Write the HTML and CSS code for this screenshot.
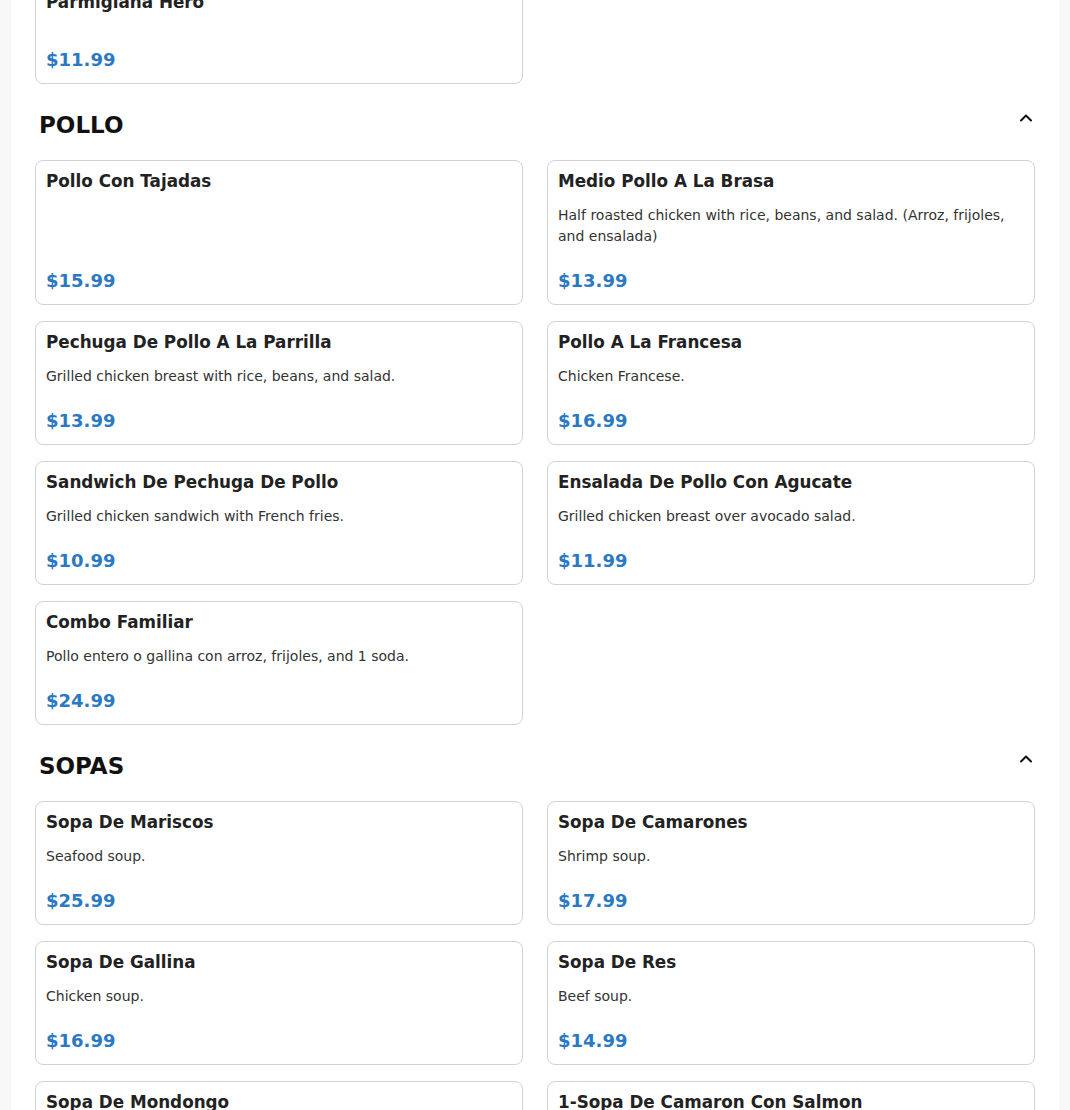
FILE: index.html
```html
<!DOCTYPE html>
<html lang="en">
<head>
<meta charset="utf-8">
<title>Menu</title>
<link rel="stylesheet" href="styles.css">
</head>
<body>
<main class="container">
  <section class="section section-prev">
    <div class="grid">
      <div class="card">
        <h3 class="item-name">Parmigiana Hero</h3>
        <div class="price">$11.99</div>
      </div>
    </div>
  </section>

  <section class="section">
    <div class="section-header">
      <h2 class="section-title">POLLO</h2>
      <svg class="chevron" width="14" height="14" viewBox="0 0 14 14" aria-hidden="true"><path d="M2 9.5 L7 4.5 L12 9.5" fill="none" stroke="#111" stroke-width="2" stroke-linecap="round" stroke-linejoin="round"/></svg>
    </div>
    <div class="grid">
      <div class="card">
        <h3 class="item-name">Pollo Con Tajadas</h3>
        <div class="price">$15.99</div>
      </div>
      <div class="card">
        <h3 class="item-name">Medio Pollo A La Brasa</h3>
        <p class="item-desc">Half roasted chicken with rice, beans, and salad. (Arroz, frijoles, and ensalada)</p>
        <div class="price">$13.99</div>
      </div>
      <div class="card">
        <h3 class="item-name">Pechuga De Pollo A La Parrilla</h3>
        <p class="item-desc">Grilled chicken breast with rice, beans, and salad.</p>
        <div class="price">$13.99</div>
      </div>
      <div class="card">
        <h3 class="item-name">Pollo A La Francesa</h3>
        <p class="item-desc">Chicken Francese.</p>
        <div class="price">$16.99</div>
      </div>
      <div class="card">
        <h3 class="item-name">Sandwich De Pechuga De Pollo</h3>
        <p class="item-desc">Grilled chicken sandwich with French fries.</p>
        <div class="price">$10.99</div>
      </div>
      <div class="card">
        <h3 class="item-name">Ensalada De Pollo Con Agucate</h3>
        <p class="item-desc">Grilled chicken breast over avocado salad.</p>
        <div class="price">$11.99</div>
      </div>
      <div class="card">
        <h3 class="item-name">Combo Familiar</h3>
        <p class="item-desc">Pollo entero o gallina con arroz, frijoles, and 1 soda.</p>
        <div class="price">$24.99</div>
      </div>
    </div>
  </section>

  <section class="section">
    <div class="section-header">
      <h2 class="section-title">SOPAS</h2>
      <svg class="chevron" width="14" height="14" viewBox="0 0 14 14" aria-hidden="true"><path d="M2 9.5 L7 4.5 L12 9.5" fill="none" stroke="#111" stroke-width="2" stroke-linecap="round" stroke-linejoin="round"/></svg>
    </div>
    <div class="grid">
      <div class="card">
        <h3 class="item-name">Sopa De Mariscos</h3>
        <p class="item-desc">Seafood soup.</p>
        <div class="price">$25.99</div>
      </div>
      <div class="card">
        <h3 class="item-name">Sopa De Camarones</h3>
        <p class="item-desc">Shrimp soup.</p>
        <div class="price">$17.99</div>
      </div>
      <div class="card">
        <h3 class="item-name">Sopa De Gallina</h3>
        <p class="item-desc">Chicken soup.</p>
        <div class="price">$16.99</div>
      </div>
      <div class="card">
        <h3 class="item-name">Sopa De Res</h3>
        <p class="item-desc">Beef soup.</p>
        <div class="price">$14.99</div>
      </div>
      <div class="card">
        <h3 class="item-name">Sopa De Mondongo</h3>
        <p class="item-desc">Tripe soup.</p>
        <div class="price">$15.99</div>
      </div>
      <div class="card">
        <h3 class="item-name">1-Sopa De Camaron Con Salmon</h3>
        <p class="item-desc">Shrimp and salmon soup.</p>
        <div class="price">$21.99</div>
      </div>
    </div>
  </section>
</main>
</body>
</html>
```

FILE: styles.css
```css
html, body {
  margin: 0;
  padding: 0;
}

body {
  background: #f8f8f8;
  font-family: "DejaVu Sans", Verdana, sans-serif;
  color: #222;
  overflow: hidden;
}

.container {
  margin: -19px 11px 0;
  padding: 0 24px 40px;
  background: #ffffff;
  min-height: 1200px;
}

.section-header {
  display: flex;
  justify-content: space-between;
  align-items: flex-start;
  padding: 0 2px 0 4px;
  margin: 27px 0 20px;
}

.section-title {
  margin: 0;
  font-size: 23px;
  line-height: 29px;
  font-weight: bold;
  color: #111;
}

.chevron {
  flex: none;
}

.grid {
  display: grid;
  grid-template-columns: 1fr 1fr;
  column-gap: 24px;
  row-gap: 16px;
}

.card {
  display: flex;
  flex-direction: column;
  border: 1px solid #d2d2d2;
  border-radius: 8px;
  padding: 10px;
  background: #fff;
}

.item-name {
  margin: 0 0 14px;
  font-size: 16.8px;
  line-height: 20px;
  font-weight: bold;
  color: #222;
}

.item-desc {
  margin: 0;
  font-size: 14px;
  line-height: 21px;
  color: #333;
}

.price {
  margin-top: auto;
  padding-top: 20px;
  font-size: 18px;
  line-height: 27px;
  font-weight: bold;
  color: #2b79c2;
}
```
